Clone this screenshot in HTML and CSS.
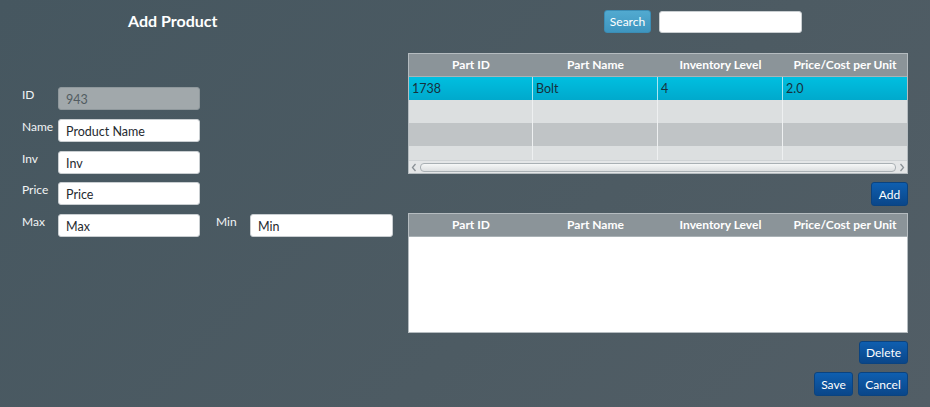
FILE: index.html
```html
<!DOCTYPE html>
<html>
<head>
<meta charset="utf-8">
<link rel="stylesheet" href="styles.css">
</head>
<body>
<div class="page">
  <section class="left">
    <h1 class="title">Add Product</h1>
    <div class="form">
      <div class="row">
        <label class="lbl">ID</label>
        <input class="field field-disabled" value="943" disabled>
      </div>
      <div class="row">
        <label class="lbl">Name</label>
        <input class="field" value="Product Name">
      </div>
      <div class="row">
        <label class="lbl">Inv</label>
        <input class="field" value="Inv">
      </div>
      <div class="row">
        <label class="lbl">Price</label>
        <input class="field" value="Price">
      </div>
      <div class="row">
        <label class="lbl">Max</label>
        <input class="field" value="Max">
        <label class="lbl lbl-min">Min</label>
        <input class="field field-min" value="Min">
      </div>
    </div>
  </section>
  <section class="right">
    <div class="search-row">
      <button class="btn btn-search">Search</button>
      <input class="field search-input" value="">
    </div>
    <div class="table table-top">
      <div class="thead">
        <div class="th">Part ID</div>
        <div class="th">Part Name</div>
        <div class="th">Inventory Level</div>
        <div class="th">Price/Cost per Unit</div>
      </div>
      <div class="tbody">
        <div class="tr tr-selected">
          <div class="td">1738</div><div class="td">Bolt</div><div class="td">4</div><div class="td">2.0</div>
        </div>
        <div class="tr tr-even">
          <div class="td"></div><div class="td"></div><div class="td"></div><div class="td"></div>
        </div>
        <div class="tr tr-odd">
          <div class="td"></div><div class="td"></div><div class="td"></div><div class="td"></div>
        </div>
        <div class="tr tr-even tr-short">
          <div class="td"></div><div class="td"></div><div class="td"></div><div class="td"></div>
        </div>
      </div>
      <div class="hscroll">
        <svg class="arrow" width="11" height="11" viewBox="0 0 11 11"><path d="M6.5 2 L3.5 5.5 L6.5 9" fill="none" stroke="#8a9196" stroke-width="1.3"/></svg>
        <div class="track"></div>
        <svg class="arrow" width="11" height="11" viewBox="0 0 11 11"><path d="M4.5 2 L7.5 5.5 L4.5 9" fill="none" stroke="#8a9196" stroke-width="1.3"/></svg>
      </div>
    </div>
    <div class="btn-row btn-row-add">
      <button class="btn btn-dark">Add</button>
    </div>
    <div class="table table-bottom">
      <div class="thead">
        <div class="th">Part ID</div>
        <div class="th">Part Name</div>
        <div class="th">Inventory Level</div>
        <div class="th">Price/Cost per Unit</div>
      </div>
      <div class="tbody tbody-empty"></div>
    </div>
    <div class="btn-row btn-row-delete">
      <button class="btn btn-dark">Delete</button>
    </div>
    <div class="btn-row btn-row-save">
      <button class="btn btn-dark">Save</button>
      <button class="btn btn-dark">Cancel</button>
    </div>
  </section>
</div>
</body>
</html>
```

FILE: styles.css
```css
* { box-sizing: border-box; }
html, body {
  margin: 0;
  padding: 0;
  width: 930px;
  height: 407px;
  overflow: hidden;
}
body {
  font-family: Lato, "Open Sans", sans-serif;
  font-size: 12px;
  color: #fff;
  background: linear-gradient(135deg, #465760 0%, #4d5b63 60%, #525e66 100%);
}
.page {
  display: flex;
  height: 407px;
}
.left {
  width: 408px;
  padding-left: 22px;
}
.title {
  margin: 11px 0 0 106px;
  font-size: 16px;
  font-weight: 700;
  line-height: 20px;
  color: #fff;
}
.form {
  margin-top: 56px;
  display: flex;
  flex-direction: column;
  gap: 8.75px;
}
.row {
  display: flex;
  align-items: flex-start;
  height: 23px;
}
.lbl {
  width: 36px;
  color: #f2f4f5;
  font-size: 12px;
  line-height: 14px;
  padding-top: 1px;
}
.lbl-min {
  width: 34px;
  margin-left: 16px;
}
.field {
  width: 142px;
  height: 23px;
  border: 1px solid #c9ced1;
  border-radius: 3px;
  background: #fff;
  font-family: Lato, "Open Sans", sans-serif;
  font-size: 12.5px;
  color: #1f2a30;
  padding: 2px 7px 0;
  outline: none;
}
.field-min { width: 143px; }
.field-disabled {
  background: #a1a8ab;
  border-color: #8f989c;
  color: #525c61;
}
.right {
  width: 500px;
  display: flex;
  flex-direction: column;
}
.search-row {
  display: flex;
  gap: 8px;
  margin-top: 10px;
  margin-left: 196px;
  height: 23px;
}
.btn {
  font-family: Lato, "Open Sans", sans-serif;
  font-size: 12px;
  color: #fff;
  border-radius: 3px;
  padding: 0 8px;
  height: 24px;
  cursor: default;
}
.btn-search {
  width: 47px;
  height: 23px;
  padding: 0;
  background: linear-gradient(#52aad0, #3e95bf);
  border: 1px solid #3b8db5;
}
.search-input {
  width: 143px;
  height: 22px;
  margin-top: 1px;
}
.btn-dark {
  background: linear-gradient(#0f5fb0, #0a4689);
  border: 1px solid #0a4380;
}
.table {
  margin-top: 20px;
  border: 1px solid #b5bcc0;
  background: #fff;
  color: #1d2b33;
}
.table-top { height: 121px; display: flex; flex-direction: column; }
.table-bottom { margin-top: 7px; height: 120px; display: flex; flex-direction: column; }
.thead {
  display: grid;
  grid-template-columns: 124px 125px 125px 124px;
  height: 23px;
  background: #8b9499;
  border-bottom: 1px solid #aab2b6;
}
.th {
  color: #fff;
  font-weight: 700;
  text-align: center;
  line-height: 22px;
}
.tbody {
  display: flex;
  flex-direction: column;
}
.tr {
  display: grid;
  grid-template-columns: 124px 125px 125px 124px;
  height: 23px;
}
.tr-short { height: 14px; }
.td {
  border-right: 1px solid #eef0f1;
  padding-left: 3px;
  line-height: 23px;
  font-size: 12.5px;
}
.td:last-child { border-right: none; }
.tr-selected {
  background: linear-gradient(#00bfe0, #00a9cc);
  color: #16313d;
}
.tr-selected .td { border-right-color: #a9e6f2; }
.tr-even { background: #dcdfe0; }
.tr-odd { background: #c0c4c6; }
.tbody-empty { flex: 1; background: #fff; }
.hscroll {
  flex: 1;
  display: flex;
  align-items: center;
  background: #e4e6e7;
  border-top: 1px solid #cfd3d5;
}
.arrow {
  flex: none;
  display: block;
}
.track {
  flex: 1;
  height: 9px;
  border: 1px solid #a9b0b4;
  border-radius: 4px;
  background: linear-gradient(#f6f7f7, #dcdfe0);
}
.btn-row {
  display: flex;
  justify-content: flex-end;
  gap: 5px;
}
.btn-row-add { margin-top: 8px; }
.btn-row-add .btn { width: 37px; padding: 0; }
.btn-row-delete { margin-top: 8px; }
.btn-row-delete .btn { width: 49px; height: 23px; padding: 0; }
.btn-row-save { margin-top: 8px; }
.btn-row-save .btn:first-child { width: 39px; padding: 0; }
.btn-row-save .btn:last-child { width: 50px; padding: 0; }
```
